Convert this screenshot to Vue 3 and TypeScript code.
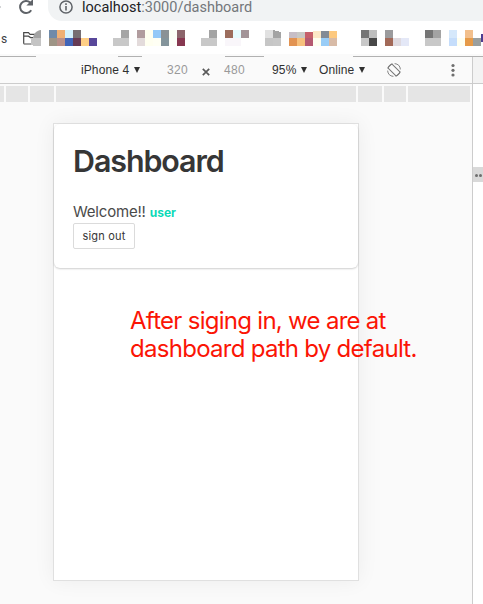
<script setup lang="ts">
interface Cell {
  x: number
  y: number
  c: string
}

const top = 1
const bottom = 9

// Each entry: left edge, colour in the upper row, colour in the lower row.
const columns: [number, string | null, string | null][] = [
  [49, '#6f8aa9', '#9e9586'],
  [57, '#efb074', '#b9908a'],
  [65, '#d5f3fd', '#4064b8'],
  [73, '#756f73', '#663b54'],
  [81, null, '#ffcf86'],
  [89, null, '#58479a'],
  [113, null, '#c8c8c8'],
  [121, '#a5a5a5', '#c8c8c8'],
  [137, '#b19c9e', '#e3dbdb'],
  [145, '#fffff0', '#fffff0'],
  [153, '#94c9f8', '#fffff4'],
  [161, '#8a9195', '#84949b'],
  [169, '#fcfef5', '#fcfef8'],
  [177, '#8c656b', '#873850'],
  [201, null, '#c8c8c8'],
  [209, '#a3a3a3', '#c8c8c8'],
  [225, '#9c6d5d', '#f9f6fa'],
  [233, '#e6fcff', '#f9f6fa'],
  [241, '#a39498', null],
  [265, '#e1e1e1', '#c6c6c6'],
  [273, '#a4a4a4', '#c8c8c8'],
  [289, '#c7bec6', '#e29352'],
  [297, '#c9c9c5', '#f7c17d'],
  [305, '#c6606a', '#b55a71'],
  [313, '#fde8c6', '#fffff0'],
  [321, '#838b95', '#99cdf7'],
  [329, '#fdc97f', '#d8bba7'],
  [361, '#757575', '#c8c8c8'],
  [369, '#bebebe', '#484848'],
  [385, '#9b9b9d', '#a26958'],
  [393, null, '#dfdae0'],
  [401, null, '#e4e8f7'],
  [425, '#757575', '#c8c8c8'],
  [433, '#a3a3a3', '#c8c8c8'],
  [449, '#d5e8fb', '#c5ddfb'],
  [457, null, '#fffff0'],
  [465, '#f2bf8c', '#e69a48'],
  [473, null, '#9a9f9f'],
]

const cells: Cell[] = columns.flatMap(([x, a, b]) => {
  const out: Cell[] = []
  if (a) out.push({ x, y: top, c: a })
  if (b) out.push({ x, y: bottom, c: b })
  return out
})
</script>

<template>
  <div class="window">
    <header class="address">
      <svg class="nav" width="48" height="21" viewBox="0 0 48 21">
        <circle cx="0" cy="7" r="1" fill="#c4c6c8" />
        <path d="M31.2 10.2A6 6 0 1 1 30.2 2.6" fill="none" stroke="#5f6368" stroke-width="2" />
        <path d="M33 -1V5.6H26.4Z" fill="#5f6368" />
      </svg>
      <div class="omnibox">
        <svg width="14" height="14" viewBox="0 0 14 14">
          <circle cx="7" cy="7" r="6.1" fill="none" stroke="#5f6368" stroke-width="1.5" />
          <path d="M7 6V10.5M7 3.3V4.9" stroke="#5f6368" stroke-width="1.6" />
        </svg>
        <span class="url"><b>localhost</b>:3000/dashboard</span>
      </div>
    </header>

    <nav class="bookmarks">
      <span class="apps">s</span>
      <svg class="mosaic" width="482" height="18" viewBox="1 0 482 18" shape-rendering="crispEdges">
        <g shape-rendering="auto">
          <path d="M23.7 14.8V3.7H28.5L30 5.3H35" fill="none" stroke="#484848" stroke-width="1.2" />
          <path d="M23.7 7.2H28.5L30.5 8.6H33M23.7 15H32" fill="none" stroke="#484848" stroke-width="1.2" />
          <path d="M33 9C33.5 5 36 1.5 41 1V9Z" fill="#a3a3a3" />
        </g>
        <rect x="33" y="9" width="8" height="8" fill="#c4c4c4" />
        <rect x="31" y="9" width="2" height="7" fill="#c4c4c4" />
        <rect v-for="(cell, i) in cells" :key="i" :x="cell.x" :y="cell.y" width="8" height="8" :fill="cell.c" />
        <path d="M265 0H273V1L281 3V0ZM289 1H313V3H289ZM313 1H337V2H313Z" fill="#fff" />
        <rect x="481" y="5" width="2" height="8" fill="#4e3d91" />
      </svg>
    </nav>

    <svg class="tab-edge" width="483" height="3" viewBox="0 0 483 3">
      <path d="M0 2.5H36M118 2.5H142M225 2.5H264M353 2.5H483" stroke="#b1b1b1" />
    </svg>

    <div class="devtools">
      <main class="device-mode">
        <div class="toolbar">
          <span class="device">iPhone 4 <i class="caret"></i></span>
          <span class="size width">320</span>
          <svg class="times" width="8" height="8" viewBox="0 0 8 8">
            <path d="M.8.8L7.2 7.2M7.2.8L.8 7.2" stroke="#5a5a5a" stroke-width="1.7" />
          </svg>
          <span class="size height">480</span>
          <span class="zoom">95% <i class="caret"></i></span>
          <span class="network">Online <i class="caret"></i></span>
          <svg class="rotate" width="14" height="14" viewBox="0 0 14 14" fill="none" stroke="#777">
            <rect x="4.2" y="1" width="5.6" height="12" rx=".8" transform="rotate(-45 7 7)" />
            <path d="M.6 7.6A6.4 6.4 0 0 0 6.4 13.4M7.6.6A6.4 6.4 0 0 1 13.4 6.4M.8 5.4A6.4 6.4 0 0 1 5.4.8M13.2 8.6A6.4 6.4 0 0 1 8.6 13.2" stroke-width=".9" />
          </svg>
          <svg class="more" width="4" height="14" viewBox="0 0 4 14" fill="#6e6e6e">
            <circle cx="2" cy="2.5" r="1.6" />
            <circle cx="2" cy="7.3" r="1.6" />
            <circle cx="2" cy="12" r="1.6" />
          </svg>
        </div>
        <div class="ruler">
          <i class="r1"></i><i class="r2"></i><i class="r3"></i><i class="r4"></i><i class="r5"></i><i class="r6"></i><i class="r7"></i>
        </div>
        <div class="stage">
          <div class="phone">
            <section class="card">
              <h1>Dashboard</h1>
              <p>Welcome!! <strong>user</strong></p>
              <button type="button">sign out</button>
            </section>
          </div>
          <p class="note">After siging in, we are at<br />dashboard path by default.</p>
        </div>
      </main>
      <aside class="side">
        <div class="side-head"></div>
        <div class="handle"><i></i><i></i></div>
      </aside>
    </div>
  </div>
</template>

<style>
body {
  margin: 0;
  overflow: hidden;
}
</style>

<style scoped>
.window {
  width: 483px;
  height: 604px;
  overflow: hidden;
  display: flex;
  flex-direction: column;
  background: #fff;
  font-family: "Liberation Sans", sans-serif;
}
.address {
  display: flex;
  height: 21px;
  flex: none;
}
.omnibox {
  flex: 1;
  display: flex;
  gap: 9px;
  padding-left: 11px;
  background: #f1f3f4;
  border-bottom-left-radius: 14px;
}
.url {
  font: 14.5px/16px Roboto, sans-serif;
  color: #73777b;
  white-space: nowrap;
}
.url b {
  font-weight: 400;
  color: #202124;
}
.bookmarks {
  height: 33px;
  flex: none;
  display: flex;
  box-sizing: border-box;
  padding: 8px 0 0 1px;
}
.apps {
  width: 0;
  font: 12px/20px Roboto, sans-serif;
  color: #3c4043;
}
.mosaic {
  flex: none;
}
.tab-edge {
  flex: none;
  background: #fafafa;
}
.devtools {
  flex: 1;
  display: flex;
  min-height: 0;
}
.device-mode {
  width: 472px;
  flex: none;
  background: #fafafa;
}
.toolbar {
  height: 26px;
  display: flex;
  align-items: center;
  border-bottom: 1px solid #ccc;
  font-size: 12px;
  color: #303030;
  white-space: nowrap;
}
.toolbar > * {
  flex: none;
}
.device {
  width: 86px;
  margin-left: 81px;
  letter-spacing: 0.1px;
}
.size {
  color: #999;
  letter-spacing: 0.3px;
}
.width {
  width: 35px;
}
.times {
  margin-top: 3px;
}
.height {
  width: 48px;
  margin-left: 14px;
}
.zoom {
  width: 47px;
  letter-spacing: 0.2px;
}
.network {
  width: 68px;
  letter-spacing: 0.1px;
}
.more {
  margin-left: 50px;
}
.caret {
  display: inline-block;
  margin-left: 1px;
  vertical-align: 1px;
  border: solid transparent;
  border-width: 6px 3.5px 0;
  border-top-color: #303030;
}
.ruler {
  height: 16px;
  margin-top: 2px;
  display: flex;
  gap: 2px;
}
.ruler i {
  background: #e5e5e5;
}
.r1 { width: 4px; }
.r2 { width: 22px; }
.r3 { width: 24px; }
.r4 { width: 300px; }
.r5 { width: 24px; }
.r6 { width: 22px; }
.r7 { width: 62px; }
.stage {
  position: relative;
  padding: 21px 0 0 53px;
}
.phone {
  width: 304px;
  height: 456px;
  border: 1px solid #e0e0e0;
  background: #fff;
  box-shadow: 0 0 20px rgba(0, 0, 0, 0.06);
  font-family: Inter, sans-serif;
}
.card {
  box-sizing: border-box;
  height: 144px;
  padding: 19px;
  border-radius: 6px;
  background: #fff;
  box-shadow: 0 1px 2px rgba(10, 10, 10, 0.2);
  color: #4a4a4a;
}
h1 {
  margin: 0 0 23px;
  font-size: 30.4px;
  line-height: 36px;
  font-weight: 600;
  letter-spacing: -1.07px;
  color: #363636;
}
.card p {
  margin: 0;
  font-size: 15px;
  line-height: 20px;
  letter-spacing: -0.2px;
}
strong {
  color: #0cd9b8;
  font-size: 12px;
  font-weight: 700;
  letter-spacing: 0;
}
button {
  display: block;
  box-sizing: border-box;
  width: 62px;
  height: 26px;
  padding: 0;
  border: 1px solid #dbdbdb;
  border-radius: 2px;
  background: #fff;
  color: #363636;
  font: 11px Inter, sans-serif;
  letter-spacing: 0.2px;
}
.note {
  position: absolute;
  left: 130px;
  top: 205px;
  margin: 0;
  font: 24px/28px Inter, sans-serif;
  letter-spacing: -0.72px;
  color: #fb1505;
  white-space: nowrap;
}
.side {
  flex: 1;
  border-left: 1px solid #ccc;
  background: #fff;
}
.side-head {
  height: 26px;
  background: #f3f3f3;
  border-bottom: 1px solid #ccc;
}
.handle {
  height: 15px;
  margin-top: 83px;
  display: flex;
  align-items: center;
  gap: 1px;
  padding-left: 2px;
  background: #d9d9d9;
}
.handle i {
  width: 3px;
  height: 3px;
  margin-top: 2px;
  border-radius: 50%;
  background: #6e6e6e;
}
</style>
